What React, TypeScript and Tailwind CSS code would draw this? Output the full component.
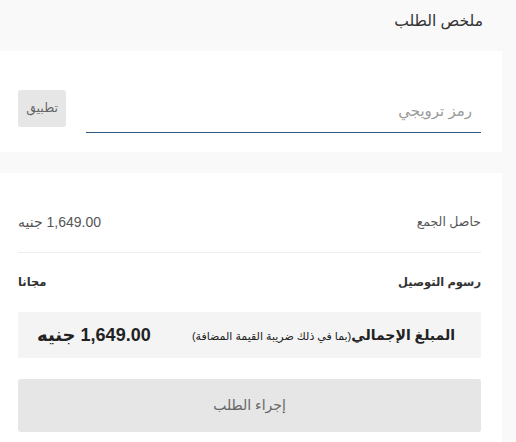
import React from "react";

export default function App() {
  const font = { fontFamily: '"Liberation Sans", "DejaVu Sans", Arial, sans-serif' };
  return (
    <div className="w-[516px] h-[442px] overflow-hidden bg-[#f9f9f9]" style={font}>
      <div dir="rtl" className="w-[502px] flex flex-col">
        <div className="h-[51px] flex items-start pr-[19px] pt-[9px]">
          <h2 className="text-[15.5px] text-[#333] leading-[24px]">ملخص الطلب</h2>
        </div>
        <div className="bg-white h-[101px] flex items-end gap-[20px] pr-[21px] pl-[18px] pb-[19px]">
          <div className="flex-1 h-[45px] border-b border-[#2f5a84] flex items-center pr-[9px] pt-[2px]">
            <span className="text-[15px] text-[#9a9a9a]">رمز ترويجي</span>
          </div>
          <button className="w-[48px] h-[37px] mb-[6px] rounded-[3px] bg-[#e6e6e6] text-[12.5px] text-[#666] flex items-center justify-center">
            تطبيق
          </button>
        </div>
        <div className="h-[21px]" />
        <div className="bg-white flex flex-col pr-[21px] pl-[18px] pt-[34px] h-[300px]">
          <div className="h-[30px] flex items-center justify-between">
            <span className="text-[12.5px] text-[#555]">حاصل الجمع</span>
            <span className="text-[14px] text-[#555]">1,649.00 جنيه</span>
          </div>
          <div className="mt-[15px] h-px bg-[#eeeeee]" />
          <div className="mt-[15px] h-[30px] flex items-center justify-between">
            <span className="text-[11.5px] font-semibold text-[#333]">رسوم التوصيل</span>
            <span className="text-[11.5px] font-semibold text-[#333]">مجانا</span>
          </div>
          <div className="mt-[14px] h-[46px] bg-[#f4f4f4] flex items-center justify-between pr-[26px] pl-[19px]">
            <span className="text-[#222]">
              <span className="text-[14px] font-bold">المبلغ الإجمالي</span>
              <span className="text-[11px]">(بما في ذلك ضريبة القيمة المضافة)</span>
            </span>
            <span className="text-[18px] font-bold text-[#222]">1,649.00 جنيه</span>
          </div>
          <button className="mt-[21px] h-[53px] w-full rounded-[3px] bg-[#e6e6e6] text-[14px] text-[#666] flex items-center justify-center">
            إجراء الطلب
          </button>
        </div>
      </div>
    </div>
  );
}
